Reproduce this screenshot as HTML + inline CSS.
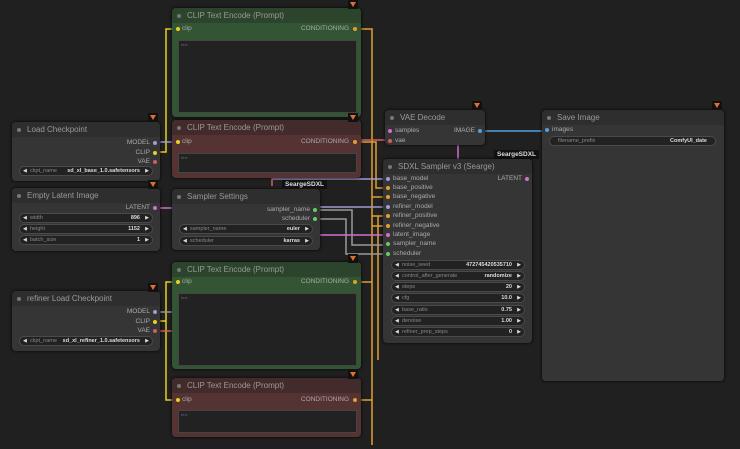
<!DOCTYPE html>
<html><head><meta charset="utf-8"><style>
*{margin:0;padding:0;box-sizing:border-box}
body{width:740px;height:449px;background:#202020;overflow:hidden;position:relative;font-family:"Liberation Sans",sans-serif;font-size:6.5px;color:#aaa}
.n{position:absolute;background:#353535;border-radius:4px;box-shadow:0 0 3px #000}
.t{height:15px;line-height:16px;padding-left:15px;font-size:8px;color:#999;border-radius:4px 4px 0 0;background:#2e2e2e;position:relative}
.t:before{content:"";position:absolute;left:5px;top:6px;width:4px;height:4px;border-radius:50%;background:#777}
.g{background:#335533}.g .t{background:#2b442b}
.r{background:#553333}.r .t{background:#442b2b}
.ta{position:absolute;background:#222;border:1px solid #444;font-size:4px;color:#666;padding:1px 2px}
.s{position:absolute;font-size:6.5px;color:#aaa;white-space:nowrap}
.d{position:absolute;width:4px;height:4px;border-radius:50%}
.w{position:absolute;height:10px;background:#222;border:1px solid #4a4a4a;border-radius:5px;font-size:5.5px;line-height:8px;color:#888;padding:0 10px;white-space:nowrap}
.w:before{content:"◀";position:absolute;left:3px;color:#ddd;font-size:5px}
.w:after{content:"▶";position:absolute;right:3px;color:#ddd;font-size:5px}
.w b{position:absolute;right:12px;color:#ddd}
.fox{position:absolute;width:10px;height:9px;background:#111}
.fox:after{content:"";position:absolute;left:2px;top:2px;border-left:3px solid transparent;border-right:3px solid transparent;border-top:5px solid #e07030}
.lab{position:absolute;background:#111;color:#ddd;font-size:6.5px;font-weight:bold;padding:0 3px;height:9px;line-height:9px}
</style></head><body>
<svg width="740" height="449" style="position:absolute;left:0;top:0" fill="none" stroke-width="1.5">
<g stroke="#e0a030">
<path d="M361 29H372V445"/><path d="M361 142H376V188H386"/><path d="M372 197H386"/><path d="M361 282H372"/><path d="M361 400H372"/><path d="M372 216H386"/><path d="M372 226H386"/><path d="M378 216V360"/>
</g>
<g stroke="#e8d020"><path d="M172 29H166V152H160"/><path d="M172 282H166V400H172"/><path d="M160 321H166"/></g>
<g stroke="#a09ad8"><path d="M160 142H172"/><path d="M272 179H386"/><path d="M320 207H386"/></g>
<g stroke="#999"><path d="M160 312H172"/><path d="M320 210H352V245H386"/><path d="M320 219H346V254H386"/></g>
<g stroke="#d070d0"><path d="M160 208H172"/><path d="M320 235H386"/><path d="M458 145V159"/></g>
<g stroke="#d06060"><path d="M160 331H172"/><path d="M361 140H386"/><path d="M272 178V186"/></g>
<path d="M484 131H542" stroke="#50a0e0"/>
</svg>
<div class="n g" style="left:172px;top:8px;width:189px;height:109px"><div class="t">CLIP Text Encode (Prompt)</div>
<span class="d" style="left:4px;top:19px;background:#e8d020"></span><span class="s" style="left:10px;top:17px">clip</span>
<span class="s" style="right:12px;top:17px">CONDITIONING</span><span class="d" style="right:4px;top:19px;background:#e0a030"></span>
<div class="ta" style="left:6px;top:32px;width:179px;height:73px">text</div></div>
<div class="n r" style="left:172px;top:120px;width:189px;height:58px"><div class="t">CLIP Text Encode (Prompt)</div>
<span class="d" style="left:4px;top:20px;background:#e8d020"></span><span class="s" style="left:10px;top:18px">clip</span>
<span class="s" style="right:12px;top:18px">CONDITIONING</span><span class="d" style="right:4px;top:20px;background:#e0a030"></span>
<div class="ta" style="left:6px;top:33px;width:179px;height:20px">text</div></div>
<div class="n" style="left:12px;top:122px;width:148px;height:59px"><div class="t">Load Checkpoint</div>
<span class="s" style="right:10px;top:17px">MODEL</span><span class="d" style="right:3px;top:19px;background:#a09ad8"></span>
<span class="s" style="right:10px;top:27px">CLIP</span><span class="d" style="right:3px;top:29px;background:#e8d020"></span>
<span class="s" style="right:10px;top:36px">VAE</span><span class="d" style="right:3px;top:38px;background:#d06060"></span>
<div class="w" style="left:7px;top:44px;width:134px">ckpt_name<b>sd_xl_base_1.0.safetensors</b></div></div>
<div class="n" style="left:12px;top:188px;width:148px;height:63px"><div class="t">Empty Latent Image</div>
<span class="s" style="right:10px;top:16px">LATENT</span><span class="d" style="right:3px;top:18px;background:#d070d0"></span>
<div class="w" style="left:7px;top:25px;width:134px">width<b>896</b></div>
<div class="w" style="left:7px;top:36px;width:134px">height<b>1152</b></div>
<div class="w" style="left:7px;top:47px;width:134px">batch_size<b>1</b></div></div>
<div class="n" style="left:172px;top:189px;width:148px;height:61px"><div class="t">Sampler Settings</div>
<span class="s" style="right:10px;top:17px">sampler_name</span><span class="d" style="right:3px;top:19px;background:#60d060"></span>
<span class="s" style="right:10px;top:26px">scheduler</span><span class="d" style="right:3px;top:28px;background:#60d060"></span>
<div class="w" style="left:7px;top:35px;width:134px">sampler_name<b>euler</b></div>
<div class="w" style="left:7px;top:47px;width:134px">scheduler<b>karras</b></div></div>
<div class="lab" style="left:282px;top:180px">SeargeSDXL</div>
<div class="n g" style="left:172px;top:262px;width:189px;height:107px"><div class="t">CLIP Text Encode (Prompt)</div>
<span class="d" style="left:4px;top:18px;background:#e8d020"></span><span class="s" style="left:10px;top:16px">clip</span>
<span class="s" style="right:12px;top:16px">CONDITIONING</span><span class="d" style="right:4px;top:18px;background:#e0a030"></span>
<div class="ta" style="left:6px;top:31px;width:179px;height:73px">text</div></div>
<div class="n" style="left:12px;top:291px;width:148px;height:60px"><div class="t">refiner Load Checkpoint</div>
<span class="s" style="right:10px;top:17px">MODEL</span><span class="d" style="right:3px;top:19px;background:#a09ad8"></span>
<span class="s" style="right:10px;top:27px">CLIP</span><span class="d" style="right:3px;top:29px;background:#e8d020"></span>
<span class="s" style="right:10px;top:36px">VAE</span><span class="d" style="right:3px;top:38px;background:#d06060"></span>
<div class="w" style="left:7px;top:45px;width:134px">ckpt_name<b>sd_xl_refiner_1.0.safetensors</b></div></div>
<div class="n r" style="left:172px;top:378px;width:189px;height:59px"><div class="t">CLIP Text Encode (Prompt)</div>
<span class="d" style="left:4px;top:20px;background:#e8d020"></span><span class="s" style="left:10px;top:18px">clip</span>
<span class="s" style="right:12px;top:18px">CONDITIONING</span><span class="d" style="right:4px;top:20px;background:#e0a030"></span>
<div class="ta" style="left:6px;top:32px;width:179px;height:23px">text</div></div>
<div class="n" style="left:385px;top:110px;width:100px;height:35px"><div class="t">VAE Decode</div>
<span class="d" style="left:3px;top:19px;background:#d070d0"></span><span class="s" style="left:10px;top:17px">samples</span>
<span class="d" style="left:3px;top:29px;background:#d06060"></span><span class="s" style="left:10px;top:27px">vae</span>
<span class="s" style="right:10px;top:17px">IMAGE</span><span class="d" style="right:3px;top:19px;background:#50a0e0"></span></div>
<div class="lab" style="left:494px;top:150px">SeargeSDXL</div>
<div class="n" style="left:383px;top:159px;width:149px;height:184px"><div class="t">SDXL Sampler v3 (Searge)</div>
<span class="s" style="right:10px;top:16px">LATENT</span><span class="d" style="right:3px;top:18px;background:#d070d0"></span>
<span class="d" style="left:3px;top:18px;background:#a09ad8"></span><span class="s" style="left:10px;top:16px">base_model</span>
<span class="d" style="left:3px;top:27px;background:#e0a030"></span><span class="s" style="left:10px;top:25px">base_positive</span>
<span class="d" style="left:3px;top:36px;background:#e0a030"></span><span class="s" style="left:10px;top:34px">base_negative</span>
<span class="d" style="left:3px;top:46px;background:#a09ad8"></span><span class="s" style="left:10px;top:44px">refiner_model</span>
<span class="d" style="left:3px;top:55px;background:#e0a030"></span><span class="s" style="left:10px;top:53px">refiner_positive</span>
<span class="d" style="left:3px;top:65px;background:#e0a030"></span><span class="s" style="left:10px;top:63px">refiner_negative</span>
<span class="d" style="left:3px;top:74px;background:#d070d0"></span><span class="s" style="left:10px;top:72px">latent_image</span>
<span class="d" style="left:3px;top:83px;background:#60d060"></span><span class="s" style="left:10px;top:81px">sampler_name</span>
<span class="d" style="left:3px;top:93px;background:#60d060"></span><span class="s" style="left:10px;top:91px">scheduler</span>
<div class="w" style="left:8px;top:101px;width:134px">noise_seed<b>472745420535710</b></div>
<div class="w" style="left:8px;top:112px;width:134px">control_after_generate<b>randomize</b></div>
<div class="w" style="left:8px;top:123px;width:134px">steps<b>20</b></div>
<div class="w" style="left:8px;top:134px;width:134px">cfg<b>10.0</b></div>
<div class="w" style="left:8px;top:146px;width:134px">base_ratio<b>0.75</b></div>
<div class="w" style="left:8px;top:157px;width:134px">denoise<b>1.00</b></div>
<div class="w" style="left:8px;top:168px;width:134px">refiner_prep_steps<b>0</b></div></div>
<div class="n" style="left:542px;top:110px;width:182px;height:271px"><div class="t">Save Image</div>
<span class="d" style="left:3px;top:18px;background:#50a0e0"></span><span class="s" style="left:10px;top:16px">images</span>
<div class="w nw" style="left:7px;top:26px;width:167px;padding-left:8px">filename_prefix<b style="right:8px">ComfyUI_date</b></div></div>
<style>.nw:before,.nw:after{content:none!important}</style>
<div class="fox" style="left:348px;top:0px"></div>
<div class="fox" style="left:148px;top:113px"></div>
<div class="fox" style="left:348px;top:113px"></div>
<div class="fox" style="left:148px;top:180px"></div>
<div class="fox" style="left:348px;top:254px"></div>
<div class="fox" style="left:148px;top:283px"></div>
<div class="fox" style="left:348px;top:370px"></div>
<div class="fox" style="left:472px;top:101px"></div>
<div class="fox" style="left:712px;top:101px"></div>
</body></html>
